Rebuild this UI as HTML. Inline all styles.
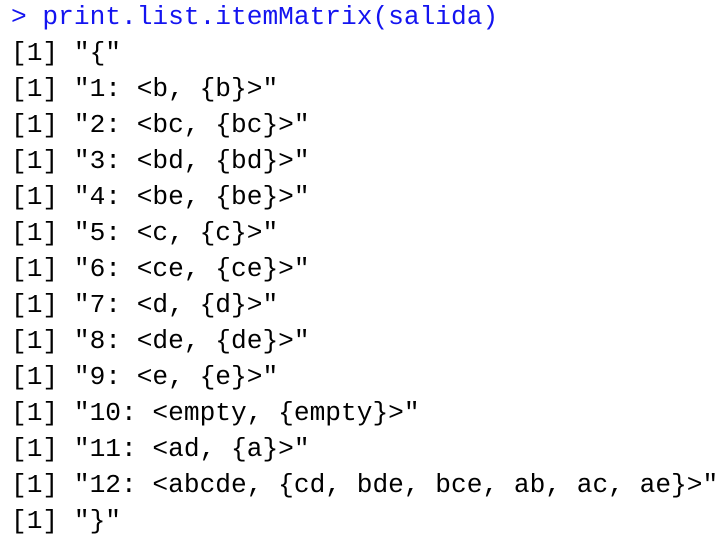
<!DOCTYPE html>
<html><head><style>
html,body{margin:0;padding:0;background:#fff;width:720px;height:542px;overflow:hidden}
pre{margin:0;position:absolute;left:11px;top:-1px;font-family:"Liberation Mono",monospace;font-size:26.2px;line-height:36px;color:#000}
.b{color:#1414f0}
</style></head><body>
<pre><span class="b">&gt; print.list.itemMatrix(salida)</span>
[1] "{"
[1] "1: &lt;b, {b}&gt;"
[1] "2: &lt;bc, {bc}&gt;"
[1] "3: &lt;bd, {bd}&gt;"
[1] "4: &lt;be, {be}&gt;"
[1] "5: &lt;c, {c}&gt;"
[1] "6: &lt;ce, {ce}&gt;"
[1] "7: &lt;d, {d}&gt;"
[1] "8: &lt;de, {de}&gt;"
[1] "9: &lt;e, {e}&gt;"
[1] "10: &lt;empty, {empty}&gt;"
[1] "11: &lt;ad, {a}&gt;"
[1] "12: &lt;abcde, {cd, bde, bce, ab, ac, ae}&gt;"
[1] "}"</pre>
</body></html>
